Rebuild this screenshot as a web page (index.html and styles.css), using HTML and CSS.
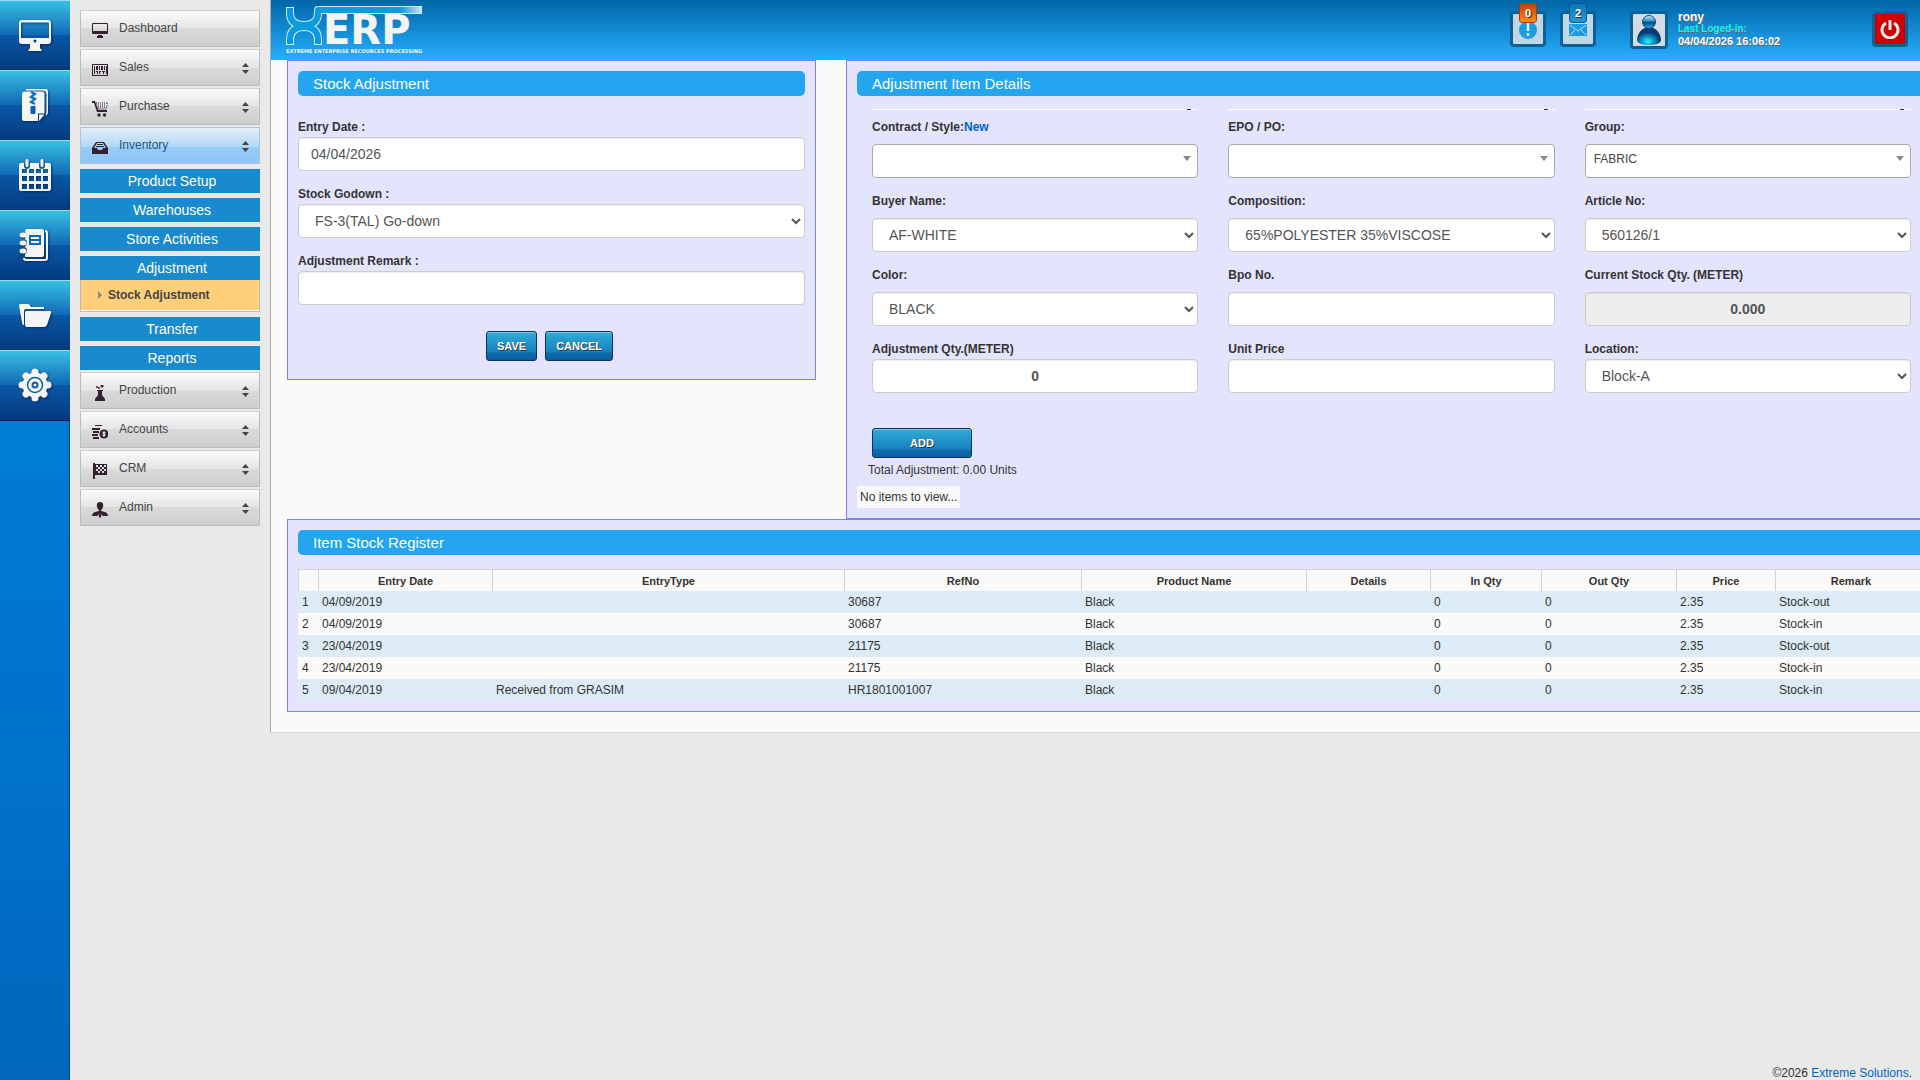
FILE: index.html
```html
<!DOCTYPE html>
<html lang="en">
<head>
<meta charset="utf-8">
<title>XERP - Stock Adjustment</title>
<link rel="stylesheet" href="styles.css">
</head>
<body>
<nav class="rail" aria-label="Shortcuts">
  <a href="#" class="rail-item" aria-label="Desktop"><svg viewBox="0 0 34 34"><path fill="#f5f5f5" fill-rule="evenodd" d="M4 2h26a3 3 0 0 1 3 3v18a3 3 0 0 1-3 3H4a3 3 0 0 1-3-3V5a3 3 0 0 1 3-3zm0 2.500a1 1 0 0 0-1 1V20h28V5.500a1 1 0 0 0-1-1zM17 21.500a1.500 1.500 0 1 0 0 3 1.500 1.500 0 0 0 0-3zM12 26h10v4l2 3H10l2-3z"/></svg></a>
  <a href="#" class="rail-item" aria-label="Archive"><svg viewBox="0 0 34 34"><path fill="#f5f5f5" d="M8 1h20q2 0 2 2v22l-2 3V6q0-3-3-3H8z"/><path fill="none" stroke="#0d62ac" d="M8 3h17q3 0 3 3v19"/><path fill="#f5f5f5" d="M6 3.500h18q2.500 0 2.500 2v20H20v7.500H6q-2 0-2-2v-25q0-2.500 2-2.500z"/><path fill="#f5f5f5" d="M21 26.500h5.500L21 33z"/><path fill="none" stroke="#0d70b8" stroke-width="2.200" d="M13 4l4 2-4 3 4 2-4 3 4 2"/><rect x="12.500" y="18" width="5" height="8" rx="1" fill="#0d5fa8"/></svg></a>
  <a href="#" class="rail-item" aria-label="Calendar"><svg viewBox="0 0 34 34"><path fill="#f5f5f5" fill-rule="evenodd" d="M3 5h3v3a3 3 0 0 0 6 0V5h9v3a3 3 0 0 0 6 0V5h4q2 0 2 2v24q0 2-2 2H3q-2 0-2-2V7q0-2 2-2zM4 11v4h5v-4zm7 0v4h5v-4zm7 0v4h5v-4zm7 0v4h5v-4zM4 18v5h5v-5zm7 0v5h5v-5zm7 0v5h5v-5zm7 0v5h5v-5zM4 26v5h5v-5zm7 0v5h5v-5zm7 0v5h5v-5zm7 0v5h5v-5z"/><rect x="7.500" y="1" width="3" height="8" rx="1.500" fill="#f5f5f5"/><rect x="22.500" y="1" width="3" height="8" rx="1.500" fill="#f5f5f5"/></svg></a>
  <a href="#" class="rail-item" aria-label="Notebook"><svg viewBox="0 0 34 34"><path fill="#f5f5f5" d="M9 1h15q2 0 2 2v24q0 2-2 2H7v-3a4 4 0 0 0 0-7v-1a4 4 0 0 0 0-7v-1a4 4 0 0 0 0-6V3q0-2 2-2z"/><path fill="none" stroke="#f5f5f5" stroke-width="2" d="M27 3q2 0 2 2v25q0 2-2 2H8q-2 0-2-2"/><g fill="#f5f5f5"><ellipse cx="5" cy="7" rx="3.500" ry="2.500"/><ellipse cx="5" cy="15" rx="3.500" ry="2.500"/><ellipse cx="5" cy="23" rx="3.500" ry="2.500"/></g><path fill="none" stroke="#0d6ab3" stroke-width="2" d="M12 8h10v8H12zM12 12h10"/></svg></a>
  <a href="#" class="rail-item" aria-label="Files"><svg viewBox="0 0 34 34"><path fill="#f5f5f5" d="M2 6h9l2 3h13v2H8q-2 0-2 2v14H5Q4 26 4 24L1 8q0-2 1-2z"/><path fill="#f5f5f5" d="M8 13h24q2 0 1 2l-4 12q-1 2-3 2H9q-2 0-2-2V14z"/></svg></a>
  <a href="#" class="rail-item" aria-label="Settings"><svg viewBox="0 0 34 34"><g stroke="#f5f5f5" stroke-width="7" stroke-linecap="round"><path d="M17 4v26M4 17h26M8 8l18 18M26 8L8 26"/></g><circle cx="17" cy="17" r="12.500" fill="#f5f5f5"/><circle cx="17" cy="17" r="7.500" fill="none" stroke="#0d60a8" stroke-width="1.500"/><circle cx="17" cy="17" r="2.500" fill="none" stroke="#0d60a8" stroke-width="2"/></svg></a>
</nav>

<aside class="sidebar">
  <nav class="menu" aria-label="Main menu">
    <a href="#" class="menu-item"><svg viewBox="0 0 16 16"><path d="M1 0h14q1 0 1 1v9q0 1-1 1H1q-1 0-1-1V1q0-1 1-1zm0 1v7h14V1zM6 12h4v1h1v2H5v-2h1z" fill-rule="evenodd"/></svg>Dashboard</a>
    <a href="#" class="menu-item has-children"><svg viewBox="0 0 16 16"><path fill-rule="evenodd" d="M0 2h16v12H0zm1 1v10h14V3zM2 4h1v8H2zm2 0h2v4H4zm3 0h1v4H7zm2 0h2v4H9zm3 0h1v4h-1zm2 0h1v8h-1zM4 9h2v3H5v-2H4zm3 0h2v1H8v2H7zm3 0h3v1h-1v2h-1v-2h-1z"/></svg>Sales</a>
    <a href="#" class="menu-item has-children"><svg viewBox="0 0 16 16"><path d="M0 0h3l3 9h9v2H5L2 2H0z"/><path d="M4 2h12l-2 6H6z" stroke-dasharray="1 1" fill="none" stroke="#34202f"/><path d="M6 4h8M6 6h8" stroke="#34202f" stroke-dasharray="1 1"/><circle cx="7" cy="14" r="1.700"/><circle cx="12.500" cy="14" r="1.700"/></svg>Purchase</a>
    <a href="#" class="menu-item has-children current"><svg viewBox="0 0 16 16"><path fill-rule="evenodd" d="M4 2h8l4 6v6H0V8zm1 1L2 8h3l1 2h4l1-2h3l-3-5zm0 1h6v1H5zM4 6h8v1H4z"/></svg>Inventory</a>
    <div class="submenu">
      <a href="#" class="submenu-title">Product Setup</a>
      <a href="#" class="submenu-title">Warehouses</a>
      <a href="#" class="submenu-title">Store Activities</a>
      <div class="submenu-group">
        <a href="#" class="submenu-title">Adjustment</a>
        <a href="#" class="submenu-link">Stock Adjustment</a>
      </div>
      <a href="#" class="submenu-title">Transfer</a>
      <a href="#" class="submenu-title">Reports</a>
    </div>
    <a href="#" class="menu-item has-children"><svg viewBox="0 0 16 16"><path d="M5 5h6v1h-1v4l3 4v2H3v-2l3-4V6H5z"/><circle cx="5" cy="2" r="1"/><circle cx="10" cy="1" r="1.500"/><circle cx="7" cy="3" r="1"/></svg>Production</a>
    <a href="#" class="menu-item has-children"><svg viewBox="0 0 16 16"><path d="M3 1h7v1H3zM0 4h8v2H0zM1 7h6v2H1zM0 10h6v2H0zM1 13h6v2H1z"/><circle cx="12" cy="10" r="4.500"/><path d="M13.500 8.500h-2.500v1.500h2v1.500h-2.500M12 7v6" fill="none" stroke="#e5e5e5"/></svg>Accounts</a>
    <a href="#" class="menu-item has-children"><svg viewBox="0 0 16 16"><path d="M1 0h2v16H1z"/><path fill-rule="evenodd" d="M3 1h12v11H3zm1 1v2h2V2zm4 0v2h2V2zm4 0v2h2V2zM6 4v2h2V4zm4 0v2h2V4zM4 6v2h2V6zm4 0v2h2V6zm4 0v2h2V6zM6 8v2h2V8zm4 0v2h2V8z"/></svg>CRM</a>
    <a href="#" class="menu-item has-children"><svg viewBox="0 0 16 16"><path d="M8 0q4 0 3 5-1 3-2 3v1l4 1q3 1 3 4h-5l-3-3-3 3H0q0-3 3-4l4-1V8Q6 8 5 5 4 0 8 0zM7.500 11h1l1 3-1.500 2-1.500-2z"/></svg>Admin</a>
  </nav>
</aside>

<div class="page">
  <main class="main">
    <header class="topbar">
      <a href="#" class="logo" aria-label="XERP home">
        <svg class="logo-mark" viewBox="0 0 142 40">
          <defs><linearGradient id="beam"><stop offset="0" stop-color="#0a9cde"/><stop offset=".8" stop-color="#0a9cde"/><stop offset="1" stop-color="#cfe8f4"/></linearGradient></defs>
          <g fill="none" stroke-linejoin="round">
            <path stroke="#cfeaf8" stroke-width="8" d="M4 1v6q0 12 14 12T32 7V4h104"/>
            <path stroke="#cfeaf8" stroke-width="8" d="M4 39v-5q0-13 14-13t14 13v5"/>
            <path stroke="#0a9cde" stroke-width="6" d="M4 2v5q0 12 14 12T32 7V4h20"/>
            <path stroke="#0a9cde" stroke-width="6" d="M4 38v-4q0-13 14-13t14 13v4"/>
          </g>
          <rect x="32" y="1" width="104" height="6" fill="url(#beam)"/>
          <text x="37" y="38" class="logo-name">ERP</text>
        </svg>
        <span class="logo-tag">EXTREME ENTERPRISE RECOURCES PROCESSING</span>
      </a>
      <div class="tools">
        <button class="tool" aria-label="Alerts"><svg viewBox="0 0 20 20"><circle cx="10" cy="11" r="9" fill="#1b9ddf"/><path d="M10 4v8M10 14v3" stroke="#e4f1f8" stroke-width="2.500"/></svg><span class="badge badge-hot">0</span></button>
        <button class="tool" aria-label="Messages"><svg viewBox="0 0 20 20"><rect x="1" y="5" width="18" height="12" fill="#1b9ddf"/><path d="M2 6l8 6 8-6M2 16l5-5M18 16l-5-5" fill="none" stroke="#b9dcee"/></svg><span class="badge">2</span></button>
        <div class="user">
          <svg class="avatar" viewBox="0 0 32 32"><defs><radialGradient id="glow" cx=".45" cy=".8"><stop offset="0" stop-color="#2ff0ff"/><stop offset=".6" stop-color="#0787bd"/><stop offset="1" stop-color="#083a72"/></radialGradient><linearGradient id="head" x2="0" y2="1"><stop offset="0" stop-color="#d5f3ff"/><stop offset=".45" stop-color="#1987c4"/><stop offset=".55" stop-color="#073f7c"/><stop offset="1" stop-color="#1fc0e8"/></linearGradient></defs><path fill="#d4dce2" d="M0 0h32v32H0z"/><path fill="url(#glow)" d="M16 13c7 0 12 7 12 13 0 3-5 5-12 5S4 29 4 26c0-6 5-13 12-13z"/><circle cx="16" cy="8" r="6.500" fill="url(#head)" stroke="#0a4a80"/></svg>
          <div class="user-text"><strong class="user-name">rony</strong><span class="user-label">Last Loged-in:</span><span class="user-date">04/04/2026 16:06:02</span></div>
        </div>
        <button class="tool power" aria-label="Log out"><svg viewBox="0 0 20 20"><path d="M6 4a8 8 0 1 0 8 0M10 1v10" fill="none" stroke="#eee" stroke-width="3"/></svg></button>
      </div>
    </header>

    <div class="content">
      <div class="columns">
        <section class="panel">
          <h2 class="panel-title">Stock Adjustment</h2>
          <form class="entry-form">
            <div class="field"><label for="entry-date">Entry Date :</label><input class="control" id="entry-date" type="text" value="04/04/2026"></div>
            <div class="field"><label for="godown">Stock Godown :</label><select class="control" id="godown"><option>FS-3(TAL) Go-down</option></select></div>
            <div class="field"><label for="remark">Adjustment Remark :</label><input class="control" id="remark" type="text"></div>
            <div class="actions"><button type="button" class="btn">SAVE</button><button type="button" class="btn">CANCEL</button></div>
          </form>
        </section>

        <section class="panel panel-open">
          <h2 class="panel-title">Adjustment Item Details</h2>
          <div class="rules"><div class="rule"></div><div class="rule"></div><div class="rule"></div></div>
          <form class="item-form">
            <div class="field spaced"><label for="contract">Contract / Style:<a href="#">New</a></label><div class="picker"><select id="contract"><option></option></select></div></div>
            <div class="field spaced"><label for="epo">EPO / PO:</label><div class="picker"><select id="epo"><option></option></select></div></div>
            <div class="field spaced"><label for="group">Group:</label><div class="picker"><select id="group"><option>FABRIC</option></select></div></div>
            <div class="field spaced"><label for="buyer">Buyer Name:</label><select class="control" id="buyer"><option>AF-WHITE</option></select></div>
            <div class="field spaced"><label for="composition">Composition:</label><select class="control" id="composition"><option>65%POLYESTER 35%VISCOSE</option></select></div>
            <div class="field spaced"><label for="article">Article No:</label><select class="control" id="article"><option>560126/1</option></select></div>
            <div class="field spaced"><label for="color">Color:</label><select class="control" id="color"><option>BLACK</option></select></div>
            <div class="field spaced"><label for="bpo">Bpo No.</label><input class="control" id="bpo" type="text"></div>
            <div class="field spaced"><label for="stock">Current Stock Qty. (METER)</label><input class="control amount" id="stock" type="text" value="0.000" readonly></div>
            <div class="field"><label for="qty">Adjustment Qty.(METER)</label><input class="control amount" id="qty" type="text" value="0"></div>
            <div class="field"><label for="price">Unit Price</label><input class="control" id="price" type="text"></div>
            <div class="field"><label for="location">Location:</label><select class="control" id="location"><option>Block-A</option></select></div>
            <button type="button" class="btn btn-add">ADD</button>
          </form>
          <p class="total">Total Adjustment: 0.00 Units</p>
          <p class="empty">No items to view...</p>
        </section>
      </div>

      <section class="panel panel-open">
        <h2 class="panel-title">Item Stock Register</h2>
        <table class="register">
          <colgroup><col class="c-num"><col class="c-date"><col><col class="c-ref"><col class="c-product"><col class="c-details"><col class="c-in"><col class="c-out"><col class="c-price"><col class="c-remark"></colgroup>
          <thead><tr><th></th><th>Entry Date</th><th>EntryType</th><th>RefNo</th><th>Product Name</th><th>Details</th><th>In Qty</th><th>Out Qty</th><th>Price</th><th>Remark</th></tr></thead>
          <tbody>
            <tr><td>1</td><td>04/09/2019</td><td></td><td>30687</td><td>Black</td><td></td><td>0</td><td>0</td><td>2.35</td><td>Stock-out</td></tr>
            <tr><td>2</td><td>04/09/2019</td><td></td><td>30687</td><td>Black</td><td></td><td>0</td><td>0</td><td>2.35</td><td>Stock-in</td></tr>
            <tr><td>3</td><td>23/04/2019</td><td></td><td>21175</td><td>Black</td><td></td><td>0</td><td>0</td><td>2.35</td><td>Stock-out</td></tr>
            <tr><td>4</td><td>23/04/2019</td><td></td><td>21175</td><td>Black</td><td></td><td>0</td><td>0</td><td>2.35</td><td>Stock-in</td></tr>
            <tr><td>5</td><td>09/04/2019</td><td>Received from GRASIM</td><td>HR1801001007</td><td>Black</td><td></td><td>0</td><td>0</td><td>2.35</td><td>Stock-in</td></tr>
          </tbody>
        </table>
      </section>
    </div>
  </main>
  <footer class="footer">©2026 <a href="#">Extreme Solutions</a>.</footer>
</div>
</body>
</html>
```
FILE: styles.css
```css
* { box-sizing: border-box; }

body {
  margin: 0;
  min-height: 100vh;
  display: flex;
  background: #e9e9e9;
  color: #333;
  font: 12px/20px "Liberation Sans", Arial, sans-serif;
}

a { color: #0066cc; text-decoration: none; }

/* icon rail */
.rail {
  flex: 0 0 70px;
  background: linear-gradient(#008ae8, #0067bd);
  border-right: 1px solid #05467f;
}

.rail-item {
  display: flex;
  align-items: center;
  justify-content: center;
  height: 70px;
  margin-right: -1px;
  padding-bottom: 2px;
  border-top: 1px solid #9adcf5;
  background: linear-gradient(#38c0e2, #1068b4 50%, #0a57a5 50%, #033a7e);
}

.rail-item:last-child { height: 71px; border-bottom: 1px solid #001c3e; }

.rail-item svg {
  width: 34px;
  height: 34px;
  filter: drop-shadow(1px 1px 1px rgba(0, 20, 60, .6));
}

/* main menu */
.sidebar { flex: 0 0 200px; padding: 10px; }

.menu { display: flex; flex-direction: column; gap: 2px; }

.menu-item {
  display: flex;
  align-items: center;
  gap: 11px;
  height: 37px;
  padding: 0 10px 2px 11px;
  border: 1px solid #bcbcbc;
  border-top-color: #d0d0d0;
  background: linear-gradient(#fbfbfb, #e4e4e4 50%, #dadada 50%, #cecece);
  color: #444;
}

.menu-item svg { width: 16px; height: 16px; margin-top: 6px; fill: #34202f; }

.menu-item.current {
  background: linear-gradient(#e2effa, #b1d6f7 55%, #97cbf8 55%, #8fc6f7);
  border-color: #a9c7d4;
  color: #17577f;
}

.has-children::after {
  content: "";
  width: 7px;
  height: 11px;
  margin: 4px 0 0 auto;
  background: #444;
  clip-path: polygon(50% 0, 100% 36%, 0 36%, 0 64%, 100% 64%, 50% 100%, 0 64%, 0 36%);
}

.submenu { display: flex; flex-direction: column; gap: 5px; padding-top: 3px; }

.submenu-title {
  display: block;
  padding-left: 4px;
  background: #198acd;
  color: #fff;
  font-size: 14px;
  line-height: 24px;
  text-align: center;
}

.submenu-link {
  display: flex;
  align-items: center;
  gap: 6px;
  height: 32px;
  padding: 0 17px 2px;
  border: 1px solid #bbb;
  border-top: 0;
  background: #ffcf79;
  box-shadow: inset 0 -1px #fff;
  color: #444;
  font-weight: bold;
}

.submenu-link::before {
  content: "";
  border: 4px solid transparent;
  border-left-color: #888;
  border-right: 0;
}

/* page frame */
.page { flex: 1; min-width: 0; display: flex; flex-direction: column; }

.main {
  border-left: 1px solid #aaa;
  border-bottom: 1px solid #ddd;
  background: #fafafa;
  overflow: hidden;
}

.footer { margin-top: auto; padding: 0 8px; line-height: 13px; text-align: right; }

/* top bar */
.topbar {
  display: flex;
  justify-content: space-between;
  height: 60px;
  padding: 0 12px 0 15px;
  background: linear-gradient(#0066a8, #28aefe);
}

.logo { display: flex; flex-direction: column; padding-top: 6px; }
.logo-mark { width: 142px; height: 40px; overflow: visible; }
.logo-name { font: bold 40px "DejaVu Sans", sans-serif; fill: #f4f4f4; }
.logo-tag { color: #f4f4f4; font: bold 5px/10px "DejaVu Sans", sans-serif; white-space: nowrap; }

.tools { display: flex; align-items: flex-start; gap: 14px; padding-top: 11px; }

.tool {
  position: relative;
  width: 36px;
  height: 36px;
  padding: 5px;
  border: 3px solid #0b6096;
  border-radius: 4px;
  background: #bfd8e6;
}

.tool svg { display: block; width: 20px; height: 20px; }

.badge {
  position: absolute;
  top: -11px;
  left: 6px;
  width: 18px;
  border: 1px solid #0a5a92;
  border-radius: 3px;
  background: linear-gradient(#0f76b6, #2496da);
  color: #fff;
  font: bold 11px/18px "Liberation Sans", Arial, sans-serif;
  text-shadow: 1px 1px #333;
}

.badge-hot { background: linear-gradient(#cc3d00, #ff8c14); border-color: #b33a05; }

.user { display: flex; gap: 10px; margin: 0 76px 0 20px; }
.avatar { width: 38px; height: 38px; border: 3px solid #0b6096; border-radius: 4px; }

.user-text {
  display: flex;
  flex-direction: column;
  min-width: 104px;
  color: #fff;
  font-size: 11px;
  font-weight: bold;
  line-height: 12px;
  white-space: nowrap;
  text-shadow: 1px 1px #666;
}

.user-name { font-size: 12px; }
.user-label { color: #0ff; font-size: 10px; }

.power { background: #d00000; }

/* panels */
.content { padding: 0 0 20px 16px; }

.columns {
  display: grid;
  grid-template-columns: 33fr 67fr;
  gap: 30px;
  align-items: start;
}

.panel { border: 1px solid #8080ff; background: #e4e4ff; padding: 10px; }
.panel-open { border-right: 0; padding-right: 0; }

.panel-title {
  margin: 0;
  padding: 0 15px;
  border-radius: 5px;
  background: #23a5f0;
  color: #fff;
  font-size: 15px;
  font-weight: normal;
  line-height: 25px;
}

.panel-open .panel-title { border-radius: 5px 0 0 5px; }

.entry-form { display: flex; flex-direction: column; gap: 13px; padding-top: 21px; }

.rules,
.item-form {
  display: grid;
  grid-template-columns: repeat(3, 1fr);
  gap: 13px 30px;
  padding: 7px 9px 0 15px;
}

.rules { padding-top: 13px; }

.rule {
  height: 1px;
  background: linear-gradient(#333, #333) right 7px top / 4px 1px no-repeat #fff;
}

.field { display: flex; flex-direction: column; }
.field label { font-weight: bold; }
.spaced { gap: 7px; }

.control {
  width: 100%;
  height: 34px;
  padding: 6px 12px;
  border: 1px solid #ccc;
  border-radius: 4px;
  background: #fff;
  box-shadow: inset 0 1px 1px rgba(0, 0, 0, .075);
  color: #555;
  font: 14px/20px "Liberation Sans", Arial, sans-serif;
}

.amount { font-weight: bold; text-align: center; }
.control:read-only:not(select) { background: #eee; }

.picker { position: relative; }

.picker select {
  appearance: none;
  display: block;
  width: 100%;
  height: 34px;
  padding: 0 20px 4px 8px;
  border: 1px solid #aaa;
  border-radius: 4px;
  background: #fff;
  color: #444;
  font: 12px/28px "Liberation Sans", Arial, sans-serif;
}

.picker::after {
  content: "";
  position: absolute;
  top: 12px;
  right: 7px;
  border: 4px solid transparent;
  border-top: 5px solid #888;
  border-bottom: 0;
}

.actions { display: flex; justify-content: center; gap: 8px; padding: 13px 4px 8px 0; }

.btn {
  height: 30px;
  padding: 0 10px;
  border: 1px solid #043463;
  border-radius: 3px;
  background: linear-gradient(#31acd6, #1780bd 72%, #0f6cad 74%, #0b5e9f);
  box-shadow: inset 0 1px #7fcbe6;
  color: #fff;
  font: bold 11px/20px "Liberation Sans", Arial, sans-serif;
  text-shadow: 1px 1px #333;
}

.btn-add { width: 100px; margin-top: 22px; }

.total { margin: 2px 0 6px 11px; }
.empty { width: fit-content; margin: 0; padding: 0 3px; background: #fafafa; line-height: 22px; }

/* stock register */
.register {
  width: calc(100% + 6px);
  margin-top: 14px;
  table-layout: fixed;
  border-collapse: separate;
  border-spacing: 0;
}

.register th {
  height: 22px;
  padding: 0;
  border: solid #d3d3d3;
  border-width: 1px 0 0 1px;
  background: #fafafa;
  font-size: 11px;
}

.register td { height: 22px; padding: 0 4px; background: #fafafa; }
.register tbody tr:nth-child(odd) td { background: #dcebf6; }

.c-num { width: 20px; }
.c-date { width: 174px; }
.c-ref { width: 237px; }
.c-product { width: 225px; }
.c-details { width: 124px; }
.c-in { width: 111px; }
.c-out { width: 135px; }
.c-price { width: 99px; }
.c-remark { width: 151px; }
```
